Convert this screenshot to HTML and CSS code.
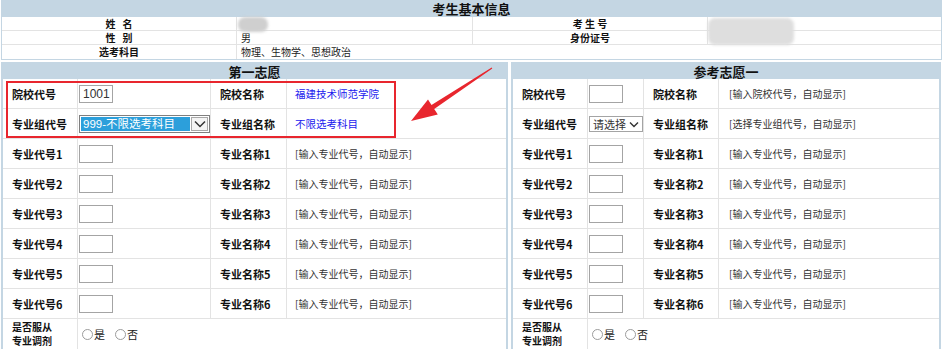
FILE: index.html
```html
<!DOCTYPE html>
<html lang="zh-CN">
<head>
<meta charset="utf-8">
<title>考生基本信息</title>
<link rel="stylesheet" href="styles.css">
</head>
<body>
<div class="page">
  <section class="info">
    <div class="info-head">考生基本信息</div>
    <div class="info-grid">
      <div class="ic lab">姓&nbsp;&nbsp;&nbsp;名</div>
      <div class="ic val"><span class="blur blur-name"></span></div>
      <div class="ic lab">考&nbsp;生&nbsp;号</div>
      <div class="ic val last"><span class="blur blur-id"></span></div>

      <div class="ic lab">性&nbsp;&nbsp;&nbsp;别</div>
      <div class="ic val">男</div>
      <div class="ic lab">身份证号</div>
      <div class="ic val last"></div>

      <div class="ic lab nob">选考科目</div>
      <div class="ic val span3 nob">物理、生物学、思想政治</div>
    </div>
  </section>

  <div class="panels">
    <section class="panel panel-left">
      <div class="panel-head">第一志愿</div>
      <div class="grid">
        <div class="c lab">院校代号</div>
        <div class="c inp"><span class="box filled">1001</span></div>
        <div class="c lab">院校名称</div>
        <div class="c val link">福建技术师范学院</div>

        <div class="c lab">专业组代号</div>
        <div class="c inp">
          <span class="sel sel-wide"><span class="sel-text hl">999-不限选考科目</span><span class="sel-btn"><svg width="12" height="8" viewBox="0 0 12 8"><polyline points="1,1.5 6,6.5 11,1.5" fill="none" stroke="#333" stroke-width="1.5"/></svg></span></span>
        </div>
        <div class="c lab">专业组名称</div>
        <div class="c val link">不限选考科目</div>

        <div class="c lab">专业代号1</div><div class="c inp"><span class="box"></span></div><div class="c lab">专业名称1</div><div class="c val">[输入专业代号，自动显示]</div>
        <div class="c lab">专业代号2</div><div class="c inp"><span class="box"></span></div><div class="c lab">专业名称2</div><div class="c val">[输入专业代号，自动显示]</div>
        <div class="c lab">专业代号3</div><div class="c inp"><span class="box"></span></div><div class="c lab">专业名称3</div><div class="c val">[输入专业代号，自动显示]</div>
        <div class="c lab">专业代号4</div><div class="c inp"><span class="box"></span></div><div class="c lab">专业名称4</div><div class="c val">[输入专业代号，自动显示]</div>
        <div class="c lab">专业代号5</div><div class="c inp"><span class="box"></span></div><div class="c lab">专业名称5</div><div class="c val">[输入专业代号，自动显示]</div>
        <div class="c lab">专业代号6</div><div class="c inp"><span class="box"></span></div><div class="c lab">专业名称6</div><div class="c val">[输入专业代号，自动显示]</div>

        <div class="c lab two nob"><span class="ln">是否服从</span><span class="ln">专业调剂</span></div>
        <div class="c radios span3 nob"><span class="radio"></span><span class="rl">是</span><span class="radio r2"></span><span class="rl">否</span></div>
      </div>
      <div class="mark"></div>
    </section>

    <section class="panel panel-right">
      <div class="panel-head">参考志愿一</div>
      <div class="grid">
        <div class="c lab">院校代号</div>
        <div class="c inp"><span class="box"></span></div>
        <div class="c lab">院校名称</div>
        <div class="c val">[输入院校代号，自动显示]</div>

        <div class="c lab">专业组代号</div>
        <div class="c inp">
          <span class="sel sel-small"><span class="sel-text">请选择</span><svg class="chev" width="10" height="7" viewBox="0 0 10 7"><polyline points="1,1.5 5,5.5 9,1.5" fill="none" stroke="#333" stroke-width="1.4"/></svg></span>
        </div>
        <div class="c lab">专业组名称</div>
        <div class="c val">[选择专业组代号，自动显示]</div>

        <div class="c lab">专业代号1</div><div class="c inp"><span class="box"></span></div><div class="c lab">专业名称1</div><div class="c val">[输入专业代号，自动显示]</div>
        <div class="c lab">专业代号2</div><div class="c inp"><span class="box"></span></div><div class="c lab">专业名称2</div><div class="c val">[输入专业代号，自动显示]</div>
        <div class="c lab">专业代号3</div><div class="c inp"><span class="box"></span></div><div class="c lab">专业名称3</div><div class="c val">[输入专业代号，自动显示]</div>
        <div class="c lab">专业代号4</div><div class="c inp"><span class="box"></span></div><div class="c lab">专业名称4</div><div class="c val">[输入专业代号，自动显示]</div>
        <div class="c lab">专业代号5</div><div class="c inp"><span class="box"></span></div><div class="c lab">专业名称5</div><div class="c val">[输入专业代号，自动显示]</div>
        <div class="c lab">专业代号6</div><div class="c inp"><span class="box"></span></div><div class="c lab">专业名称6</div><div class="c val">[输入专业代号，自动显示]</div>

        <div class="c lab two nob"><span class="ln">是否服从</span><span class="ln">专业调剂</span></div>
        <div class="c radios span3 nob"><span class="radio"></span><span class="rl">是</span><span class="radio r2"></span><span class="rl">否</span></div>
      </div>
    </section>
  </div>

  <svg class="arrow" width="944" height="349" viewBox="0 0 944 349">
    <polygon points="492.3,68.6 434.2,109.1 437.8,114.6 411,121 428,99.4 431.5,104.9 491.7,67.4" fill="#e8262e"/>
  </svg>
</div>
</body>
</html>
```

FILE: styles.css
```css
* { box-sizing: border-box; }
html, body { margin: 0; padding: 0; background: #fff; }
body {
  width: 944px;
  height: 349px;
  overflow: hidden;
  font-family: "Noto Sans CJK SC", "Liberation Sans", sans-serif;
  color: #222;
}
.page { position: relative; width: 944px; height: 349px; padding: 0 2px 0 1px; }

/* ---------- info block ---------- */
.info {
  width: 941px;
  border: 1px solid #c4d6e3;
  border-top: 0;
}
.info-head {
  height: 17px;
  background: #c4d6e3;
  text-align: center;
  font-size: 13px;
  font-weight: bold;
  line-height: 17px;
  color: #111;
}
.info-grid {
  display: grid;
  grid-template-columns: 235px 236px 235px 1fr;
}
.ic {
  height: 14px;
  font-size: 10px;
  line-height: 13px;
  border-bottom: 1px solid #e3e3e3;
  border-right: 1px solid #e3e3e3;
  position: relative;
}
.ic.last { border-right: 0; }
.ic.lab { text-align: center; font-weight: bold; color: #111; }
.ic.val { padding-left: 4px; color: #222; }
.ic.span3 { grid-column: span 3; border-right: 0; }
.ic.nob { border-bottom: 0; }
.blur {
  position: absolute;
  background: #cfcfcf;
  filter: blur(1.5px);
  border-radius: 7px;
}
.blur-name { left: 1px; top: 0; width: 30px; height: 15px; }
.blur-id { left: 0; top: 1px; width: 86px; height: 27px; background: #dedede; z-index: 1; }

/* ---------- panels ---------- */
.panels {
  display: flex;
  gap: 3px;
  margin-top: 2px;
}
.panel {
  position: relative;
  border: 2px solid #c4d6e3;
  height: 289px;
}
.panel-left { width: 507px; }
.panel-right { width: 430px; }
.panel-head {
  height: 15px;
  background: #c4d6e3;
  text-align: center;
  font-size: 13px;
  font-weight: bold;
  line-height: 15px;
  color: #111;
}
.grid { display: grid; }
.panel-left .grid { grid-template-columns: 75px 133px 76px 1fr; }
.panel-right .grid { grid-template-columns: 75px 56px 75px 1fr; }

.c {
  height: 30px;
  display: flex;
  align-items: center;
  border-bottom: 1px solid #e3e3e3;
  border-right: 1px solid #e3e3e3;
}
.c:nth-child(4n) { border-right: 0; }
.c.nob { border-bottom: 0; }
.c.span3 { grid-column: span 3; border-right: 0; }
.c.lab {
  padding-left: 9px;
  font-size: 11px;
  font-weight: bold;
  color: #111;
  white-space: nowrap;
}
.c.two {
  flex-direction: column;
  align-items: flex-start;
  justify-content: center;
  font-size: 10px;
}
.c.two .ln { display: block; height: 14.5px; line-height: 14.5px; }
.c.inp { padding-left: 1px; }
.c.val {
  padding-left: 8px;
  font-size: 10px;
  color: #333;
  white-space: nowrap;
}
.panel-right .c.val { padding-left: 10px; }
.c.val.link { color: #1a1aee; font-size: 10.5px; }

.box {
  display: inline-block;
  width: 34px;
  height: 18px;
  border: 1px solid #a4a4a4;
  background: #fff;
  font-family: "Liberation Sans", sans-serif;
  font-size: 12px;
  line-height: 16px;
  padding-left: 3px;
  color: #333;
}

.sel {
  display: inline-flex;
  align-items: center;
  border: 1px solid #7f7f7f;
  background: #fff;
  font-size: 11px;
  color: #222;
}
.sel-wide { width: 131px; height: 18px; padding: 1px; margin-top: 1px; }
.sel-wide .sel-text {
  flex: 1;
  height: 14px;
  line-height: 14px;
  padding-left: 2px;
  font-family: "Liberation Sans", "Noto Sans CJK SC", sans-serif;
  font-size: 11.5px;
}
.hl { background: #2c9fdb; color: #fff; }
.sel-btn {
  width: 17px;
  height: 14px;
  margin-left: 1px;
  border: 1px solid #a8a8a8;
  background: #f4f4f4;
  display: flex;
  align-items: center;
  justify-content: center;
}
.sel-small {
  width: 56px;
  height: 16px;
  border-color: #a4a4a4;
  padding-left: 3px;
  margin-top: 1px;
  justify-content: space-between;
  padding-right: 3px;
}
.sel-small .sel-text { font-size: 11px; line-height: 14px; color: #333; }

.radios { padding-left: 4px; font-size: 11px; color: #222; }
.radio {
  display: inline-block;
  width: 11px;
  height: 11px;
  border: 1px solid #9c9c9c;
  border-radius: 50%;
  background: #fff;
}
.radio.r2 { margin-left: 10px; }
.rl { margin-left: 1px; }

/* ---------- annotation overlay ---------- */
.mark {
  position: absolute;
  left: 3px;
  top: 17px;
  width: 390px;
  height: 57px;
  border: 2px solid #e8262e;
  pointer-events: none;
}
.arrow { position: absolute; left: 0; top: 0; pointer-events: none; }
```
